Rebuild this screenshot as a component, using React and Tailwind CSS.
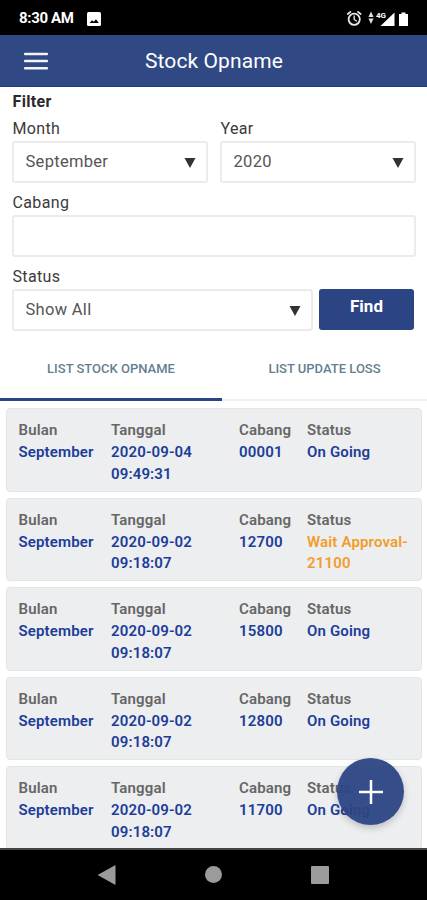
import React, { useState } from 'react';

const items = [
  { bulan: 'September', date: '2020-09-04', time: '09:49:31', cabang: '00001', status: 'On Going' },
  { bulan: 'September', date: '2020-09-02', time: '09:18:07', cabang: '12700', status: 'Wait Approval-21100', waiting: true },
  { bulan: 'September', date: '2020-09-02', time: '09:18:07', cabang: '15800', status: 'On Going' },
  { bulan: 'September', date: '2020-09-02', time: '09:18:07', cabang: '12800', status: 'On Going' },
  { bulan: 'September', date: '2020-09-02', time: '09:18:07', cabang: '11700', status: 'On Going' },
];

const StatusBar = () => (
  <div className="flex h-[35px] shrink-0 items-center bg-black pl-[19px] pr-[18px] pt-[2px] text-white">
    <span className="w-[68px] text-[15px] font-bold tracking-[-0.35px]">8:30 AM</span>
    <svg width="14" height="14" viewBox="0 0 14 14">
      <rect width="14" height="14" rx="1.5" fill="#fff" />
      <path d="M2.5 11 L5 8.3 L6.8 9.8 L9 7.3 L11.8 11 Z" fill="#000" />
    </svg>
    <svg className="ml-auto" width="63" height="18" viewBox="0 0 63 18">
      <g fill="none" stroke="#e8e8e8" strokeLinecap="round">
        <circle cx="8.2" cy="9.3" r="5.6" strokeWidth="1.8" />
        <path d="M1.8 4 L4.4 1.9 M12 1.9 L14.6 4" strokeWidth="1.8" />
        <path d="M8.2 6 V9.5 L10.5 11" strokeWidth="1.3" />
      </g>
      <path d="M25 1.5 L27.6 7 H22.4 Z M25 14 L27.6 8.5 H22.4 Z" fill="#ddd" />
      <path d="M48.5 2.5 V16 H34.5 Z" fill="#fff" />
      <text x="30" y="8" fill="#fff" stroke="#000" strokeWidth="1.6" paintOrder="stroke" className="text-[8px] font-bold">4G</text>
      <path d="M53 4 H55.5 V2.5 H59.5 V4 H62 V16 H53 Z" fill="#fff" />
    </svg>
  </div>
);

const Header = () => (
  <header className="flex h-[52px] shrink-0 items-center border-b border-[#1d3a78] bg-[#304985] pl-6 text-white">
    <svg aria-label="Menu" width="24" height="20" viewBox="0 0 24 20">
      <path d="M1 3 H23 M1 10 H23 M1 17.3 H23" stroke="#f2f4fa" strokeWidth="2.4" strokeLinecap="round" />
    </svg>
    <h1 className="flex-1 pr-[47px] pt-[2px] text-center text-[21px] tracking-[0.1px]">Stock Opname</h1>
  </header>
);

const SelectField = ({ value }) => (
  <div className="flex h-[42px] items-center justify-between rounded-[3px] border-2 border-[#ebebeb] pl-[11.5px] pr-[10px] text-[16.5px] tracking-[0.3px] text-[#555]">
    <span className="pt-px">{value}</span>
    <svg className="mt-[2px]" width="12" height="12" viewBox="0 0 12 12">
      <path d="M0.5 1 H11.5 L6 11 Z" fill="#333" />
    </svg>
  </div>
);

const Label = ({ children }) => (
  <div className="h-[23px] pl-[0.5px] pt-px text-[16px] leading-[20px] tracking-[0.35px] text-[#3a3a3a]">{children}</div>
);

const Filter = () => (
  <section className="h-[251px] shrink-0 px-[12px] pt-[4px]">
    <h2 className="h-[27px] pl-[0.5px] pt-px text-[16px] font-bold leading-[20px] tracking-[0.35px] text-[#2a2a2a]">Filter</h2>
    <div className="grid h-[74px] grid-cols-[196px_196px] gap-[12px]">
      <div>
        <Label>Month</Label>
        <SelectField value="September" />
      </div>
      <div>
        <Label>Year</Label>
        <SelectField value="2020" />
      </div>
    </div>
    <div className="h-[74px] w-[404px]">
      <Label>Cabang</Label>
      <input aria-label="Cabang" className="block h-[42px] w-full rounded-[3px] border-2 border-[#ebebeb] px-3 outline-none" />
    </div>
    <Label>Status</Label>
    <div className="flex gap-[6px]">
      <div className="w-[301px]">
        <SelectField value="Show All" />
      </div>
      <button className="h-[41px] w-[95px] rounded-[3px] bg-[#2b4483] pb-[6px] text-[17px] font-bold text-white">Find</button>
    </div>
  </section>
);

const Tabs = () => {
  const [active, setActive] = useState(0);

  return (
    <div className="flex h-[63px] shrink-0 text-[13px] font-medium text-[#64808f]">
      {['LIST STOCK OPNAME', 'LIST UPDATE LOSS'].map((tab, i) => (
        <button
          key={tab}
          onClick={() => setActive(i)}
          className={`${i === 0 ? 'w-[222px]' : 'w-[205px]'} ${
            active === i ? 'border-b-[3px] border-[#2b4483]' : 'border-b-2 border-[#eff0f2]'
          } pt-px`}
        >
          {tab}
        </button>
      ))}
    </div>
  );
};

const Column = ({ title, children, className }) => (
  <div className={className}>
    <div className="mb-px text-[#666]">{title}</div>
    <div>{children}</div>
  </div>
);

const StockCard = ({ item }) => (
  <div className="flex h-[83.5px] shrink-0 rounded-[4px] border border-[#e3e6e7] bg-[#eceeef] pl-[11.5px] pt-[11px] text-[15px] font-semibold leading-[21.3px] tracking-[0.15px] text-[#1d3d99]">
    <Column title="Bulan" className="w-[92.5px]">{item.bulan}</Column>
    <Column title="Tanggal" className="w-[128px]">
      {item.date}
      <br />
      {item.time}
    </Column>
    <Column title="Cabang" className="w-[68px]">{item.cabang}</Column>
    <Column title="Status" className="w-[106px]">
      <span className={item.waiting ? 'text-[#f39c2c]' : ''}>{item.status}</span>
    </Column>
  </div>
);

const NavBar = () => (
  <nav className="flex h-[52px] shrink-0 items-center justify-center gap-[89px] border-t-2 border-[#444] bg-black pb-px">
    <svg width="18" height="20" viewBox="0 0 18 20">
      <path d="M17.5 0 V20 L-0.5 10 Z" fill="#9b9b9b" />
    </svg>
    <span className="h-[17px] w-[17px] rounded-full bg-[#9b9b9b]" />
    <span className="h-[18px] w-[18px] rounded-[1px] bg-[#9b9b9b]" />
  </nav>
);

export default function App() {
  return (
    <div className="relative flex h-[900px] w-[427px] flex-col overflow-hidden bg-white font-['Roboto',sans-serif]">
      <StatusBar />
      <Header />
      <Filter />
      <Tabs />
      <main className="flex min-h-0 flex-1 flex-col gap-[6px] overflow-hidden pl-[6px] pr-[5px] pt-[7px]">
        {items.map((item) => (
          <StockCard key={item.cabang} item={item} />
        ))}
      </main>
      <NavBar />
      {/* Floating add button sits over the list */}
      <button aria-label="Add" className="absolute left-[337px] top-[758px] flex h-[67px] w-[67px] items-center justify-center rounded-full bg-[#2b4483]/95 shadow-[0_3px_7px_rgba(0,0,0,0.2)]">
        <svg width="24" height="24" viewBox="0 0 24 24">
          <path d="M12 0 V24 M0 12 H24" stroke="#fff" strokeWidth="2.5" />
        </svg>
      </button>
    </div>
  );
}
